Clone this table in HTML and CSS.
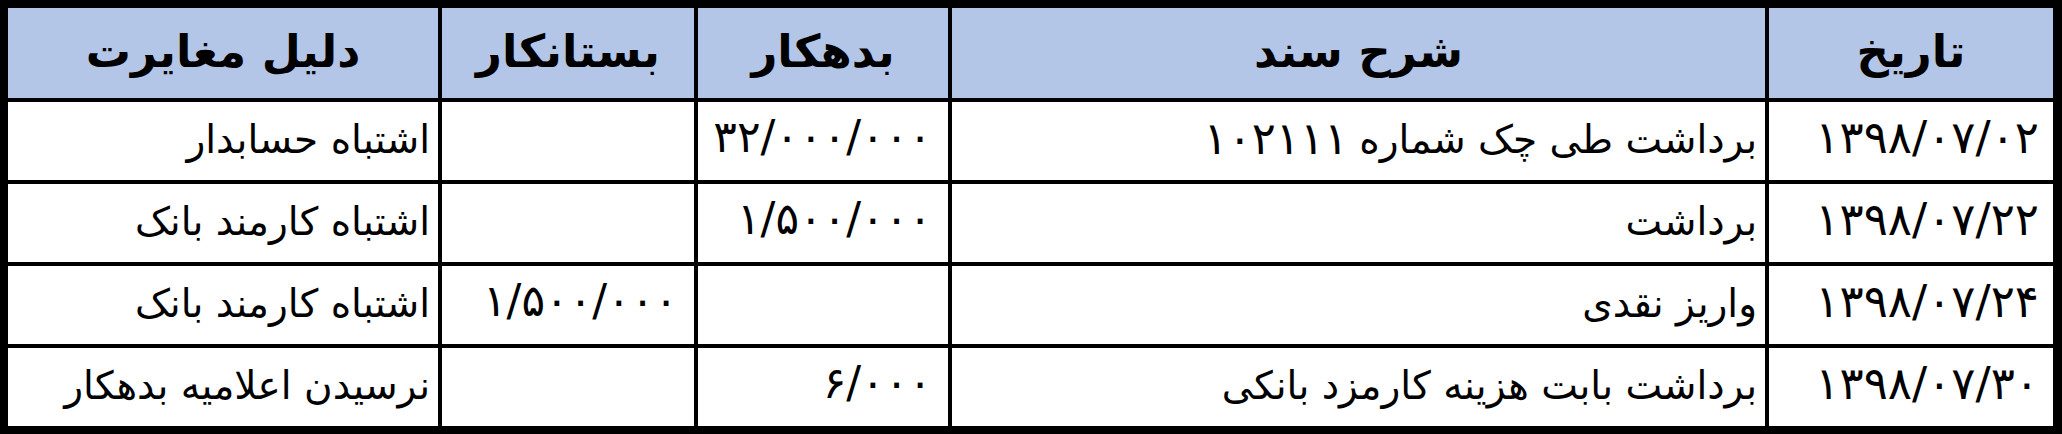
FILE: index.html
```html
<!DOCTYPE html>
<html lang="fa" dir="rtl">
<head>
<meta charset="utf-8">
<title>مغایرت</title>
<link rel="stylesheet" href="styles.css">
</head>
<body>
<div class="sheet" role="table">
  <div class="cell head" role="columnheader">تاریخ</div>
  <div class="cell head" role="columnheader">شرح سند</div>
  <div class="cell head" role="columnheader">بدهکار</div>
  <div class="cell head" role="columnheader">بستانکار</div>
  <div class="cell head" role="columnheader">دلیل مغایرت</div>

  <div class="cell num date">۱۳۹۸/۰۷/۰۲</div>
  <div class="cell">برداشت طی چک شماره <span class="digits">۱۰۲۱۱۱</span></div>
  <div class="cell num">۳۲/۰۰۰/۰۰۰</div>
  <div class="cell num"></div>
  <div class="cell">اشتباه حسابدار</div>

  <div class="cell num date">۱۳۹۸/۰۷/۲۲</div>
  <div class="cell">برداشت</div>
  <div class="cell num">۱/۵۰۰/۰۰۰</div>
  <div class="cell num"></div>
  <div class="cell">اشتباه کارمند بانک</div>

  <div class="cell num date">۱۳۹۸/۰۷/۲۴</div>
  <div class="cell">واریز نقدی</div>
  <div class="cell num"></div>
  <div class="cell num">۱/۵۰۰/۰۰۰</div>
  <div class="cell">اشتباه کارمند بانک</div>

  <div class="cell num date">۱۳۹۸/۰۷/۳۰</div>
  <div class="cell">برداشت بابت هزینه کارمزد بانکی</div>
  <div class="cell num">۶/۰۰۰</div>
  <div class="cell num"></div>
  <div class="cell">نرسیدن اعلامیه بدهکار</div>
</div>
</body>
</html>
```
FILE: styles.css
```css
html, body {
  margin: 0;
  padding: 0;
  background: #000;
}

.sheet {
  display: grid;
  grid-template-columns: 284px 813px 250px 252px 430px;
  grid-template-rows: 90px 78px 78px 78px 78px;
  gap: 4px;
  padding: 8px 9px 8px 8px;
  background: #000;
  width: 2045px;
  font-family: "DejaVu Sans", sans-serif;
  color: #000;
}

.cell {
  background: #fff;
  display: flex;
  align-items: center;
  justify-content: flex-start;
  padding: 0 8px 4px;
  font-size: 39px;
  line-height: 1;
  white-space: nowrap;
  overflow: hidden;
}

.head {
  background: #b4c6e7;
  justify-content: center;
  font-weight: bold;
  font-size: 45px;
  padding-bottom: 4px;
}

.num {
  font-size: 44px;
  letter-spacing: 1px;
  padding-right: 16px;
  padding-bottom: 8px;
}

.date {
  font-size: 45px;
  letter-spacing: 2px;
  padding-right: 14px;
}

.digits {
  font-size: 1.15em;
  letter-spacing: 1px;
  margin-right: 0.25em;
}
```
